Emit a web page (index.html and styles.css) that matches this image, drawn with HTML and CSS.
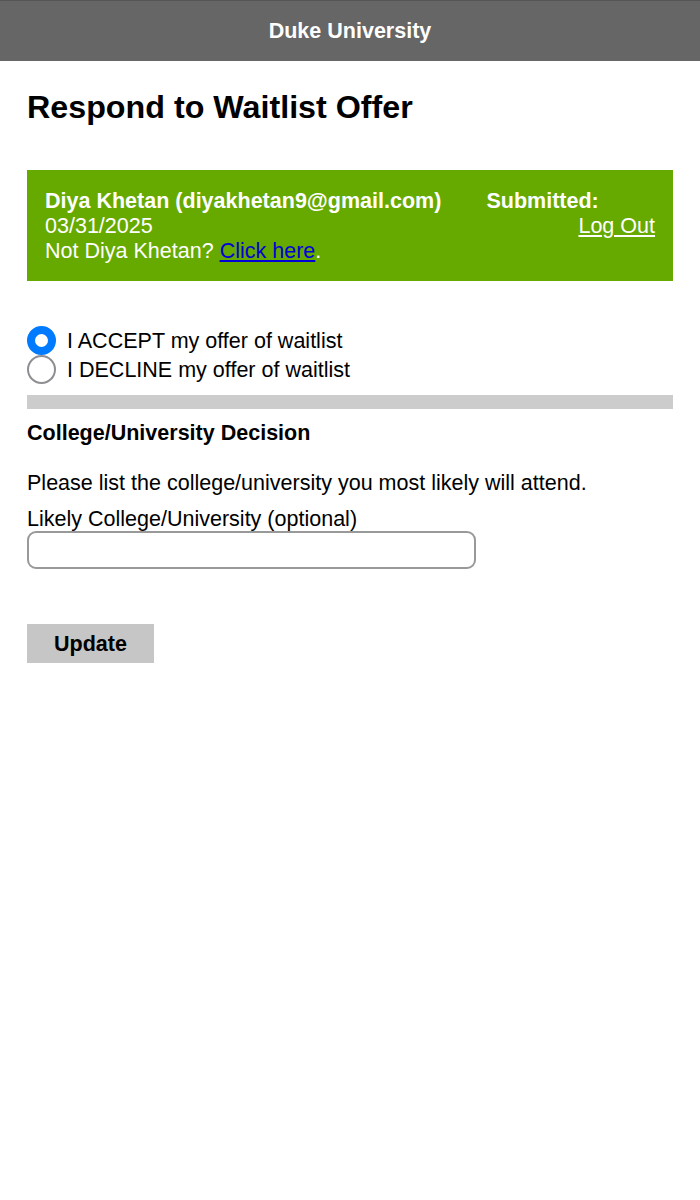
FILE: index.html
```html
<!DOCTYPE html>
<html lang="en">

<head>
<meta charset="UTF-8">
<meta name="viewport" content="width=device-width, initial-scale=1.0">
<title>Respond to Waitlist Offer</title>
<link rel="stylesheet" href="styles.css">
</head>
<body>
<header class="header">Duke University</header>
<main class="content">
  <h1>Respond to Waitlist Offer</h1>
  <div class="banner">
    <div class="account">
      <strong>Diya Khetan (diyakhetan9@gmail.com)</strong>
      <strong>Submitted:</strong>
    </div>
    <div class="account-date">
      <span>03/31/2025</span>
      <a href="#">Log Out</a>
    </div>
    <div>Not Diya Khetan? <a class="switch" href="#">Click here</a>.</div>
  </div>
  <form>
    <div class="choices">
      <label><input type="radio" name="response" checked><span>I ACCEPT my offer of waitlist</span></label>
      <label><input type="radio" name="response"><span>I DECLINE my offer of waitlist</span></label>
    </div>
    <h2>College/University Decision</h2>
    <p>Please list the college/university you most likely will attend.</p>
    <label class="field-label" for="college">Likely College/University (optional)</label>
    <input class="field" type="text" id="college">
    <button class="update" type="button">Update</button>
  </form>
</main>
</body>
</html>
```
FILE: styles.css
```css
body {
  font-family: "Liberation Sans", Arial, sans-serif;
  font-size: 21.53px;
  line-height: 25px;
  color: #000;
  background-color: #fff;
  margin: 0;
}

.header {
  box-sizing: border-box;
  height: 61px;
  padding-top: 18px;
  border-top: 1px solid #555;
  background-color: #666;
  color: #fff;
  font-weight: bold;
  text-align: center;
}

.content {
  padding: 26px 27px;
}

h1 {
  margin: 0 0 43px;
  font-size: 32.25px;
  line-height: 40px;
}

.banner {
  box-sizing: border-box;
  height: 111px;
  padding: 19px 18px 17px;
  background-color: #6a0;
  color: #fff;
}

.account {
  display: flex;
  gap: 45px;
  white-space: nowrap;
}

.account-date {
  display: flex;
  justify-content: space-between;
}

.banner a {
  color: #fff;
}

.banner .switch {
  color: #0000d8;
}

.choices {
  margin-top: 45px;
}

.choices label {
  display: flex;
  align-items: center;
  height: 29px;
}

.choices span {
  padding-top: 2px;
}

.choices input {
  appearance: none;
  box-sizing: border-box;
  flex: none;
  width: 29px;
  height: 29px;
  margin: 0 11px 0 0;
  border: 2px solid #8e8e93;
  border-radius: 50%;
  background-color: #fff;
}

.choices input:checked {
  border: 8px solid #007aff;
}

h2 {
  margin: 11px 0 0;
  padding-top: 12px;
  border-top: 14px solid #ccc;
  font-size: 21.53px;
  line-height: 25px;
}

p {
  margin: 25px 0 11px;
}

.field-label {
  display: block;
  height: 24px;
}

.field {
  display: block;
  box-sizing: border-box;
  width: 449px;
  height: 38px;
  margin: 0;
  border: 2px solid #999;
  border-radius: 9px;
  font: inherit;
}

.update {
  display: block;
  width: 127px;
  height: 39px;
  margin-top: 55px;
  padding: 2px 0 0;
  border: 0;
  background-color: #c6c6c6;
  color: #000;
  font: inherit;
  font-weight: bold;
}
```
